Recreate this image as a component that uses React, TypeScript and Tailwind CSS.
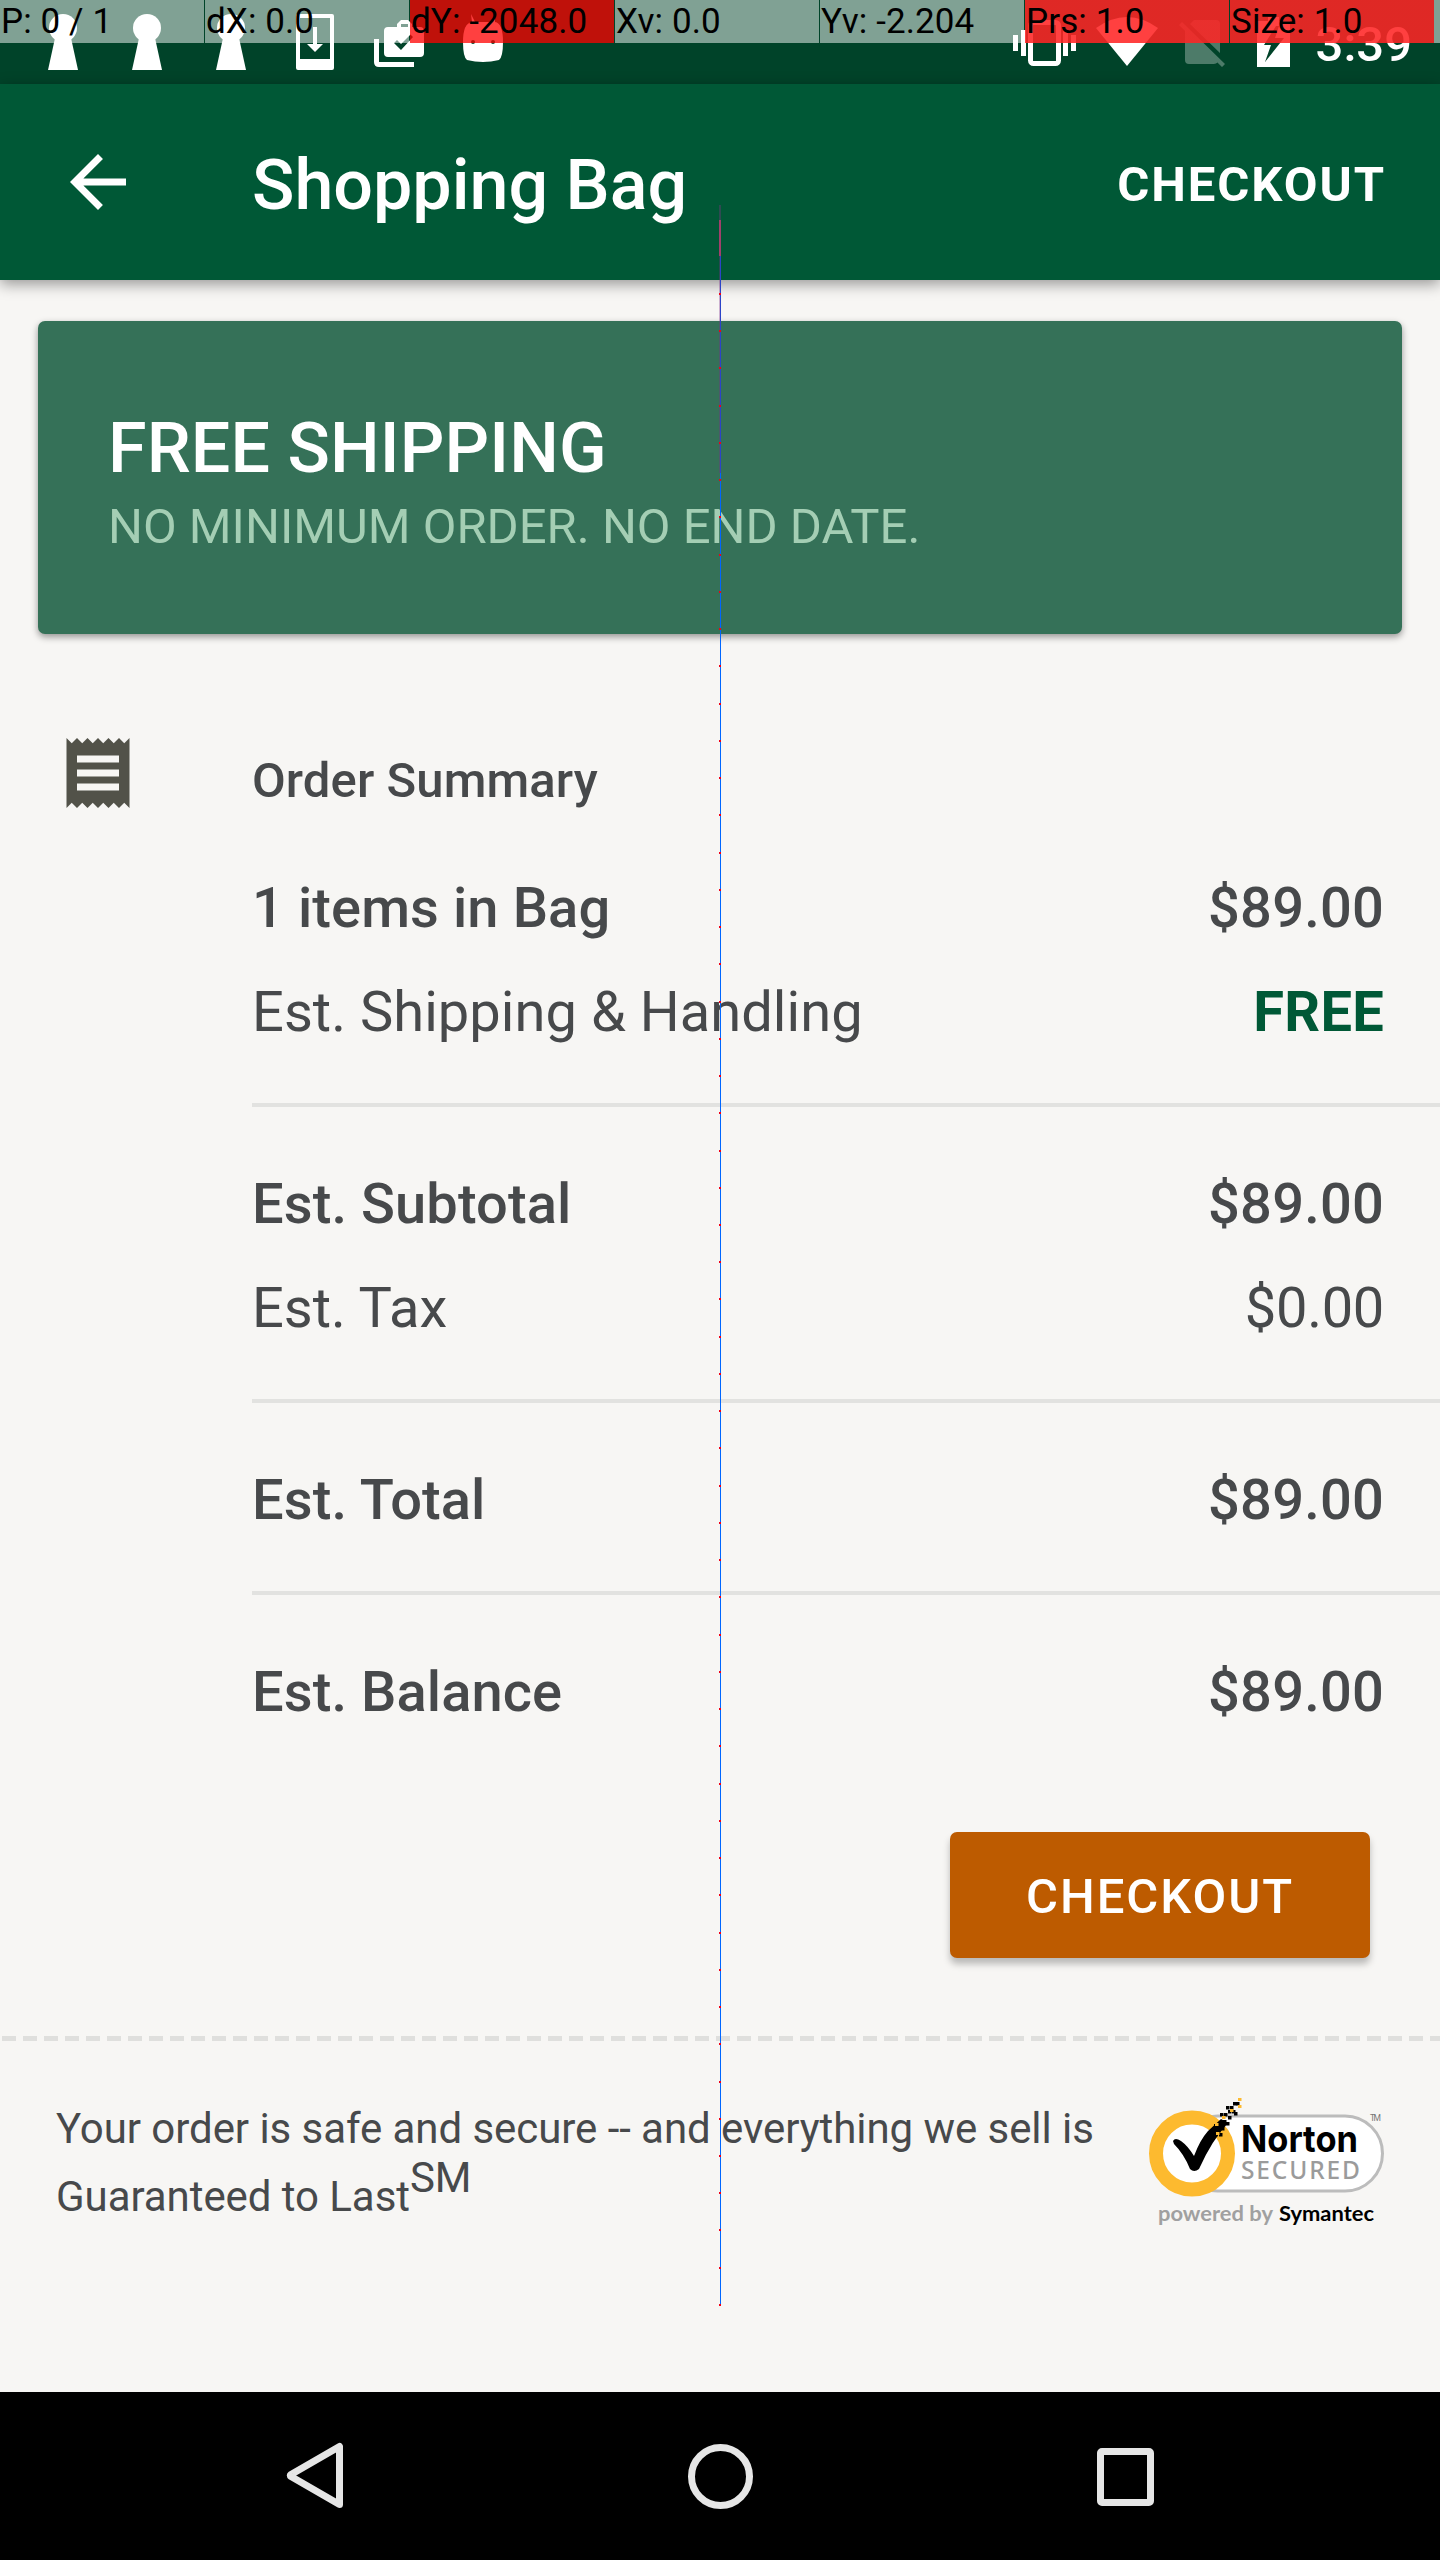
import React from "react";

const overlayCells = [
  { text: "P: 0 / 1", fill: "bg-white/50" },
  { text: "dX: 0.0", fill: "bg-white/50" },
  { text: "dY: -2048.0", fill: "bg-[#ff0000bf]" },
  { text: "Xv: 0.0", fill: "bg-white/50" },
  { text: "Yv: -2.204", fill: "bg-white/50" },
  { text: "Prs: 1.0", fill: "bg-[linear-gradient(#ff0000bf,#ff0000bf),linear-gradient(#ffffff80,#ffffff80)]" },
  { text: "Size: 1.0", fill: "bg-[linear-gradient(#ff0000bf,#ff0000bf),linear-gradient(#ffffff80,#ffffff80)]" },
];

function PointerOverlay() {
  return (
    <div className="absolute inset-x-0 top-0 flex h-[43px]">
      {overlayCells.map((c) => (
        <div key={c.text} className={`mr-px h-[43px] w-[204px] shrink-0 pl-px text-[35px] leading-[44px] tracking-[0.1px] whitespace-nowrap text-black ${c.fill}`}>
          {c.text}
        </div>
      ))}
      <div className="-ml-px h-[43px] flex-1 bg-white/50" />
    </div>
  );
}

function PointerTrail() {
  const dots = Array.from({ length: 55 }, (_, i) => Math.round(293 + i * 37.24));
  return (
    <svg className="pointer-events-none absolute top-0 left-[710px]" width="20" height="2320" viewBox="710 0 20 2320" shapeRendering="crispEdges">
      <rect x="719" y="205" width="2" height="15" fill="#2f4a52" />
      <rect x="719" y="220" width="2" height="36" fill="#a1406b" />
      <rect x="719" y="256" width="1" height="217" fill="#7a2f8a" opacity=".35" />
      <rect x="720" y="256" width="1" height="217" fill="#2c44c8" />
      <rect x="720" y="473" width="1" height="1832" fill="#0066ff" />
      {dots.map((y) => (
        <rect key={y} x="719" y={y} width="2" height="2" fill="#f00018" />
      ))}
    </svg>
  );
}

function Keyhole() {
  return (
    <svg width="84" height="84" viewBox="0 0 84 84" fill="#fff">
      <circle cx="42" cy="28" r="14" />
      <path d="M34 38H50L57 70H27Z" />
    </svg>
  );
}

function StatusBar() {
  return (
    <div className="relative flex h-[84px] bg-[#004329]">
      <div className="flex pl-[21px]">
        <Keyhole />
        <Keyhole />
        <Keyhole />
        <svg width="84" height="84" viewBox="273 0 84 84" fill="#fff">
          <path fillRule="evenodd" d="M298 14H332Q334 14 334 16V68Q334 70 332 70H298Q296 70 296 68V16Q296 14 298 14ZM300 18V59H330V18Z" />
          <path d="M313 27H317V44H323L315 52L307 44H313Z" />
        </svg>
        <svg width="84" height="84" viewBox="357 0 84 84" fill="#fff">
          <path d="M374 39H379V62H414V67H379Q374 67 374 62Z" />
          <path fillRule="evenodd" d="M397 27V24L401 20H408L412 24V27H420Q424 27 424 31V53Q424 57 420 57H388Q384 57 384 53V31Q384 27 388 27ZM401 27H408V24H401ZM394 43L401 50L413 37L410.500 34.500L401 44L397 40Z" />
        </svg>
        <svg width="84" height="84" viewBox="441 0 84 84" fill="#fff">
          <path fillRule="evenodd" d="M471 14L475 22H491L495 17V22Q503 23 503 42Q503 57 499 60Q483 64 467 60Q463 57 463 42Q463 23 472 22ZM473 40A2 2 0 1 0 473 44A2 2 0 1 0 473 40ZM493 40A2 2 0 1 0 493 44A2 2 0 1 0 493 40Z" />
        </svg>
      </div>
      <div className="ml-auto flex">
        <svg width="300" height="84" viewBox="1003 0 300 84" fill="#fff">
          <path d="M1013 35H1018V51H1013ZM1021 30H1026V56H1021ZM1063 30H1068V56H1063ZM1071 35H1076V51H1071Z" />
          <rect x="1030.500" y="22.500" width="28" height="41" rx="3" fill="none" stroke="#fff" strokeWidth="5" />
          <path d="M1127 66L1096 28Q1127 6 1158 28Z" />
          <path opacity=".3" d="M1194 20H1216Q1220 20 1220 24V53L1190 24ZM1185 29L1218 62Q1216 64 1214 64H1189Q1185 64 1185 60ZM1182 22L1225 64L1222 67L1179 25Z" />
          <path fillRule="evenodd" d="M1257 21H1268V17H1279V21H1290V67H1257ZM1276 26L1264 45H1271L1265 62L1284 38H1275L1279 26Z" />
        </svg>
        <div className="mr-[28px] ml-[11px] w-[98px] text-right text-[49px] leading-[89px] font-medium text-white">3:39</div>
      </div>
      <PointerOverlay />
    </div>
  );
}

function AppBar() {
  return (
    <header className="relative flex h-[196px] items-center bg-[#005836] pr-[54px] text-white shadow-[0_4px_14px_rgba(0,0,0,0.4)]">
      <svg className="ml-14" width="84" height="84" viewBox="0 0 24 24" fill="#fff">
        <path d="M20 11H7.830l5.590-5.590L12 4l-8 8 8 8 1.410-1.410L7.830 13H20v-2z" />
      </svg>
      <h1 className="ml-28 pt-1.5 text-[70px] leading-[84px] font-medium">Shopping Bag</h1>
      <button className="ml-auto pt-1.5 text-[49px] leading-[60px] font-bold tracking-[1.96px]">CHECKOUT</button>
    </header>
  );
}

type RowProps = { label: string; value: string; labelClass?: string; valueClass?: string };

function Row({
  label,
  value,
  labelClass = "font-medium tracking-[0.1px]",
  valueClass = "font-medium tracking-[0.2px]",
}: RowProps) {
  return (
    <div className="flex h-[104px] items-center justify-between pr-14 text-[56px] leading-[66px]">
      <span className={labelClass}>{label}</span>
      <span className={valueClass}>{value}</span>
    </div>
  );
}

function NortonBadge() {
  const dots = [[140, 33], [144, 33], [148, 30], [146, 26], [150, 26], [153, 22], [156, 22], [152, 30], [148, 36], [138, 42], [143, 40], [134, 44], [137, 49], [141, 47], [146, 42], [130, 50], [134, 53], [139, 53], [129, 56], [154, 32]];
  const gold = [[158, 18], [158, 25], [150, 29], [135, 43], [142, 36], [136, 52]];
  return (
    <svg className="shrink-0" width="252" height="160" viewBox="60 0 252 160">
      <rect x="100" y="36" width="202.500" height="75" rx="37.500" fill="#fff" stroke="#bcbcbc" strokeWidth="3" />
      <circle cx="112" cy="73.500" r="36" fill="#fff" stroke="#fdba2f" strokeWidth="14" />
      <path d="M93 61Q95 57 101 61Q108 66 114 76Q120 60 128 51L141 39L148 43Q132 60 119 89Q114 93 110 89Q104 74 94 64Z" fill="#000" />
      {dots.map(([x, y]) => <rect key={`${x}-${y}`} x={x} y={y} width="3.500" height="3.500" />)}
      {gold.map(([x, y]) => <rect key={`${x}-${y}`} x={x} y={y} width="3.500" height="3" fill="#fdba2f" />)}
      <text x="161" y="72" fontFamily="Inter, sans-serif" fontWeight="700" fontSize="37" textLength="117" lengthAdjust="spacingAndGlyphs">Norton</text>
      <text x="161" y="98.500" fontFamily="'Noto Sans', sans-serif" fontWeight="500" fontSize="24.500" fill="#9b9b9b" textLength="119" lengthAdjust="spacing">SECURED</text>
      <text x="290" y="41" fontFamily="Roboto, sans-serif" fontSize="8.500" fill="#777" textLength="11">TM</text>
      <text x="78" y="140.500" fontFamily="Lato, sans-serif" fontWeight="700" fontSize="21" fill="#a0a0a0" textLength="115" lengthAdjust="spacingAndGlyphs">powered by</text>
      <text x="199" y="140.500" fontFamily="Lato, sans-serif" fontWeight="700" fontSize="21" textLength="95" lengthAdjust="spacingAndGlyphs">Symantec</text>
    </svg>
  );
}

function NavBar() {
  return (
    <nav className="flex h-[168px] items-center justify-between bg-black pr-[273px] pl-[273px]">
      <svg width="84" height="84" viewBox="0 0 84 84" fill="none" stroke="#e6e6e6" strokeWidth="7" strokeLinejoin="round">
        <path d="M66.500 12.500V70.500L18 42.500Q16.500 41.500 18 40.500Z" />
      </svg>
      <svg width="84" height="84" viewBox="0 0 84 84" fill="none" stroke="#e6e6e6" strokeWidth="7">
        <circle cx="42.500" cy="42.500" r="29" />
      </svg>
      <svg width="84" height="84" viewBox="0 0 84 84" fill="none" stroke="#e6e6e6" strokeWidth="7">
        <rect x="17.500" y="17.500" width="50" height="51" rx="1.500" />
      </svg>
    </nav>
  );
}

export default function App() {
  return (
    <div className="relative flex h-[2560px] w-[1440px] flex-col overflow-hidden bg-[#f7f6f4] font-[Roboto,sans-serif] text-[#47494b]">
      <StatusBar />
      <AppBar />
      <main className="flex flex-1 flex-col">
        <section className="mx-[38px] mt-[41px] h-[313px] rounded-[7px] bg-[#357158] pt-[85px] pl-[70px] shadow-[0_3px_7px_rgba(0,0,0,0.4)]">
          <h2 className="text-[70px] leading-[84px] font-medium tracking-[0.1px] text-white">FREE SHIPPING</h2>
          <p className="pt-[7px] text-[49px] leading-[60px] text-[#a4ceb4]">NO MINIMUM ORDER. NO END DATE.</p>
        </section>
        <section className="mt-[97px] flex">
          <svg className="ml-14" width="84" height="84" viewBox="0 0 24 24" fill="#525249">
            <path d="M18 17H6v-2h12v2zm0-4H6v-2h12v2zm0-4H6V7h12v2zM3 22l1.500-1.500L6 22l1.500-1.500L9 22l1.500-1.500L12 22l1.500-1.500L15 22l1.500-1.500L18 22l1.500-1.500L21 22V2l-1.500 1.500L18 2l-1.500 1.500L15 2l-1.500 1.500L12 2l-1.500 1.500L9 2 7.500 3.500 6 2 4.500 3.500 3 2v20z" />
          </svg>
          <div className="ml-28 flex-1">
            <h3 className="pt-5 text-[49px] leading-[60px] font-medium tracking-[0.1px]">Order Summary</h3>
            <div className="mt-[45px] border-b-[4px] border-[#e2e2e0] pb-[39px]">
              <Row label="1 items in Bag" value="$89.00" />
              <Row label="Est. Shipping &amp; Handling" value="FREE" labelClass="tracking-[0.05px]" valueClass="font-bold tracking-[0.3px] text-[#005836]" />
            </div>
            <div className="border-b-[4px] border-[#e2e2e0] pt-[45px] pb-[39px]">
              <Row label="Est. Subtotal" value="$89.00" />
              <Row label="Est. Tax" value="$0.00" labelClass="" valueClass="tracking-[-0.3px]" />
            </div>
            <div className="border-b-[4px] border-[#e2e2e0] pt-[45px] pb-[39px]">
              <Row label="Est. Total" value="$89.00" />
            </div>
            <div className="pt-[45px]">
              <Row label="Est. Balance" value="$89.00" />
            </div>
          </div>
        </section>
        <button className="mt-[88px] mr-[70px] h-[126px] w-[420px] self-end rounded-[7px] bg-[#bd5b00] pt-1 text-[49px] font-medium tracking-[1.96px] text-white shadow-[0_6px_7px_rgba(0,0,0,0.25)]">CHECKOUT</button>
        <div className="mt-[78px] h-[5px] bg-[repeating-linear-gradient(90deg,transparent_0_2px,#dfdfdd_2px_16px,transparent_16px_21px)]" />
        <footer className="flex pl-14">
          <p className="w-[1064px] pt-[54px] text-[42px] leading-[68px] tracking-[-0.06px]">
            Your order is safe and secure -- and everything we sell is Guaranteed to Last<span className="relative -top-[19px]">SM</span>
          </p>
          <div className="mt-[39px] ml-5"><NortonBadge /></div>
        </footer>
      </main>
      <NavBar />
      <PointerTrail />
    </div>
  );
}
